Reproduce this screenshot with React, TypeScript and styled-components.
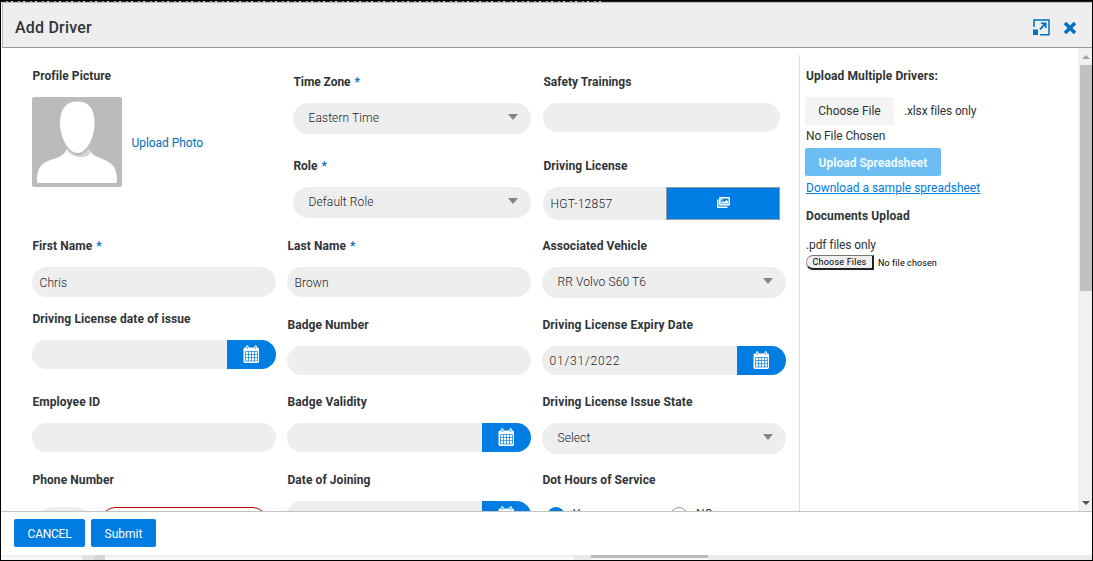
import React from "react";
import styled, { createGlobalStyle } from "styled-components";

const blue = "#007de3";
const pill = "#eeeeee";
const ink = "#2f3438";

const GlobalStyle = createGlobalStyle`
  * { box-sizing: border-box; }
  body { margin: 0; background: #fff; overflow: hidden; }
  button { font: inherit; padding: 0; }
`;

const Frame = styled.div`
  width: 1093px;
  height: 561px;
  border: 1px solid #000;
  display: flex;
  flex-direction: column;
  overflow: hidden;
  color: ${ink};
  font-family: Roboto, "Liberation Sans", sans-serif;
  font-size: 12px;
  background: #fff;
`;

const Backdrop = styled.div`
  height: 1px;
  flex: none;
  background: repeating-linear-gradient(90deg, #222 0 5px, #999 5px 7px, #222 7px 10px, #ddd 10px 12px) left / 600px 1px no-repeat #201c22;
`;

const Header = styled.header`
  height: 46px;
  flex: none;
  margin-left: 1px;
  border: 1px solid #999;
  border-top-color: #bbb;
  border-left-color: #bbb;
  border-right: 0;
  background: #eeeeee;
  display: flex;
  align-items: center;
  padding: 5px 15px 0 12px;
  gap: 13px;
`;

const Title = styled.h1`
  flex: 1;
  margin: 0;
  font-size: 16px;
  font-weight: 500;
  line-height: 20px;
  letter-spacing: 0.2px;
`;

const IconButton = styled.button`
  border: 0;
  background: none;
  display: flex;
`;

const Body = styled.main`
  height: 463px;
  flex: none;
  display: flex;
  overflow: hidden;
`;

const Form = styled.div`
  display: flex;
  gap: 11px;
  padding-left: 31px;
  width: 798px;
  flex: none;
`;

const Column = styled.div`
  width: 244px;
  flex: none;
  display: flex;
  flex-direction: column;
`;

const Field = styled.div<{ $before: number; $left?: number; $right?: number }>`
  flex: none;
  margin: ${(p) => p.$before}px ${(p) => p.$right ?? 0}px 0 ${(p) => p.$left ?? 0}px;
`;

const Label = styled.label<{ $ls?: number }>`
  display: block;
  height: 20px;
  line-height: 20px;
  margin-bottom: 11px;
  padding-left: 0.4px;
  font-weight: 700;
  white-space: nowrap;
  letter-spacing: ${(p) => p.$ls ?? 0.08}px;
`;

const Star = styled.span`
  color: #0071c1;
  margin-left: 4px;
`;

const Control = styled.div<{ $h?: number; $select?: boolean }>`
  height: ${(p) => p.$h ?? 29}px;
  border-radius: 16px;
  background: ${pill};
  display: flex;
  align-items: center;
  justify-content: space-between;
  overflow: hidden;
  padding-left: ${(p) => (p.$select ? 15.5 : 7.5)}px;
  padding-right: ${(p) => (p.$select ? 13 : 0)}px;
`;

const Value = styled.span<{ $ls?: number; $down?: number }>`
  white-space: nowrap;
  font-weight: 300;
  color: #1d2225;
  line-height: 16px;
  margin-top: ${(p) => p.$down ?? 0}px;
  letter-spacing: ${(p) => p.$ls ?? 0.1}px;
`;

const Caret = styled.span`
  border: 5.5px solid transparent;
  border-top: 6px solid #858585;
  border-bottom: 0;
  margin-top: -3px;
`;

const DateButton = styled.button`
  width: 49px;
  height: 100%;
  border: 0;
  background: ${blue};
  display: flex;
  align-items: center;
  justify-content: center;
  padding-bottom: 2px;
`;

const ImageButton = styled.button`
  width: 114px;
  height: 100%;
  border: 1px solid #8f9ba6;
  background: ${blue};
  display: flex;
  align-items: center;
  justify-content: center;
  padding-bottom: 3px;
`;

const LicenseControl = styled(Control)`
  border-radius: 16px 0 0 16px;
`;

const Profile = styled.div`
  display: flex;
  align-items: center;
  gap: 9px;
`;

const PhotoLink = styled.a`
  color: #006fb8;
  margin-top: 2px;
  padding-left: 0.5px;
  letter-spacing: -0.05px;
`;

const PhoneRow = styled.div`
  display: flex;
  gap: 12px;
  padding: 6px 9px 0 7px;
`;

const CodeBox = styled.div`
  width: 50px;
  height: 29px;
  border-radius: 14px;
  background: ${pill};
`;

const PhoneBox = styled.div`
  width: 167px;
  height: 29px;
  border-radius: 14px;
  border: 1px solid #b60000;
`;

const RadioRow = styled.div`
  display: flex;
  align-items: flex-start;
  padding: 6px 0 0 5px;
`;

const Radio = styled.span<{ $on?: boolean }>`
  width: 18px;
  height: 18px;
  border-radius: 50%;
  border: 1px solid ${(p) => (p.$on ? blue : "#999")};
  background: ${(p) => (p.$on ? blue : "#fff")};
`;

const RadioText = styled.span<{ $w?: number }>`
  width: ${(p) => p.$w ?? 40}px;
  padding-left: 8px;
  line-height: 14px;
`;

const Side = styled.aside`
  margin-top: 7px;
  border-left: 1px solid #ddd;
  padding-left: 6px;
  width: 279px;
  flex: none;
  display: flex;
  flex-direction: column;
  align-items: flex-start;
`;

const SideTitle = styled.h2<{ $before: number }>`
  margin: ${(p) => p.$before}px 0 0;
  font-size: 12px;
  font-weight: 700;
  line-height: 20px;
  letter-spacing: 0.1px;
`;

const FileRow = styled.div`
  display: flex;
  align-items: center;
  gap: 10px;
  margin-top: 11px;
`;

const ChooseFile = styled.button`
  width: 89px;
  height: 28px;
  margin-left: -1px;
  border: 0;
  border-radius: 2px;
  background: #f4f4f4;
  color: ${ink};
`;

const SideText = styled.span<{ $before?: number; $ls?: number }>`
  margin-top: ${(p) => p.$before ?? 0}px;
  line-height: 16px;
  letter-spacing: ${(p) => p.$ls ?? -0.1}px;
`;

const UploadButton = styled.button`
  width: 136px;
  height: 28px;
  margin: 4px 0 0 -1px;
  border: 0;
  border-radius: 2px;
  background: #6bbdf2;
  color: #eef8ff;
  font-weight: 700;
  padding-top: 1px;
`;

const SampleLink = styled.a`
  color: #007bdc;
  text-decoration: underline;
  margin-top: 4px;
  line-height: 16px;
`;

const NativeRow = styled.div`
  display: flex;
  align-items: center;
  gap: 4px;
  margin-top: 2px;
  font-size: 9px;
  letter-spacing: 0.1px;
  color: #000;
`;

const NativeButton = styled.button`
  width: 68px;
  height: 15px;
  border: 1px solid #222;
  border-width: 1px 2px 2px 1px;
  border-left-color: #999;
  border-top-color: #777;
  border-radius: 7px 0 0 7px;
  background: #efefef;
  line-height: 11px;
  padding-top: 1px;
  letter-spacing: 0.2px;
`;

const Scroll = styled.div`
  width: 14px;
  flex: none;
  background: #f1f1f1;
  display: flex;
  flex-direction: column;
  align-items: center;
  padding: 7px 0 6px 2px;
`;

const Arrow = styled.span<{ $down?: boolean }>`
  border: 4px solid transparent;
  border-${(p) => (p.$down ? "top" : "bottom")}: 4px solid ${(p) => (p.$down ? "#505050" : "#a3a3a3")};
  border-${(p) => (p.$down ? "bottom" : "top")}: 0;
  margin-top: ${(p) => (p.$down ? "auto" : 0)};
`;

const Thumb = styled.div`
  width: 12px;
  height: 226px;
  margin-top: 6px;
  background: #c1c1c1;
`;

const Footer = styled.footer`
  height: 44px;
  flex: none;
  border-top: 1px solid #c3c3c3;
  display: flex;
  gap: 6px;
  padding: 7px 0 0 13px;
`;

const Action = styled.button<{ $w: number; $ls?: number }>`
  width: ${(p) => p.$w}px;
  height: 28px;
  border: 0;
  border-radius: 2px;
  background: ${blue};
  color: #fff;
  padding-top: 1px;
  letter-spacing: ${(p) => p.$ls ?? 0}px;
`;

const Behind = styled.div`
  flex: 1;
  display: flex;
  background: linear-gradient(#e9e9e9, #f7f7f7 2px);
`;

const BehindPart = styled.div<{ $w: number; $c: string; $h?: number }>`
  width: ${(p) => p.$w}px;
  height: ${(p) => p.$h ?? 5}px;
  background: ${(p) => p.$c};
`;

const CalendarIcon = () => (
  <svg width="17" height="18" viewBox="0 0 17 18">
    <path fill="#fff" d="M1.500 2.500h1.600v-1a1.200 1.200 0 0 1 2.400 0v1h6v-1a1.200 1.200 0 0 1 2.400 0v1h1.100l1 1V17l-1 1h-13.500l-1-1V3.500z" />
    <path fill="none" stroke={blue} strokeWidth=".7" d="M2.500 6.500h12v9.500h-12zM2.500 9.500h12M2.500 12.700h12M5.500 6.500V16M8.500 6.500V16M11.500 6.500V16" />
    <path stroke={blue} strokeWidth=".7" d="M4.300 1.500v2.500M12.700 1.500v2.500" />
  </svg>
);

const ImagesIcon = () => (
  <svg width="13" height="11" viewBox="0 0 13 11">
    <path fill="none" stroke="#fff" strokeWidth="1.500" d="M.8 2.500v7.700h9.700" />
    <path fill="#fff" fillRule="evenodd" d="M3 0h9q1 0 1 1v6.500q0 1-1 1H3q-1 0-1-1V1q0-1 1-1zm.7 1.500V7h7.800V1.500z" />
    <path fill="#fff" d="M4.300 6.500V5.200L5.800 4l1.300 1.100L9.800 3l1.200 1.400v2.100zM4.300 2h1.500v1.300H4.300z" />
  </svg>
);

const ExpandIcon = () => (
  <svg width="17" height="17" viewBox="0 0 17 17">
    <path fill="none" stroke="#0071c1" strokeWidth="1.500" d="M1 8V1h15v14.800H7" />
    <path fill="#0071c1" d="M0 10.500h5V16H0zM8 3.500h5.500V9h-1.600V6.500L7.500 11 6.300 9.800l4.300-4.500H8z" />
  </svg>
);

const CloseIcon = () => (
  <svg width="14" height="14" viewBox="0 0 14 14">
    <path stroke="#0071c1" strokeWidth="3.600" d="M2 2l10 10M12 2L2 12" />
  </svg>
);

const Avatar = () => (
  <svg width="90" height="90" viewBox="0 0 90 90">
    <rect width="90" height="90" rx="2" fill="#bbbbbb" />
    <path fill="#fff" d="M35 51q0 4 5 6.500 8 5 17-1l-1-5q3 6 12 9.500c13 5 17 9 17 23.500q0 1.500-2 1.500H7q-2 0-2-1.500C5 70 10 65 22 62q12-4 13-11z" />
    <path fill="#d3d3d3" d="M35.500 52q4 8 13.500 8 8 0 9-4l-2-4q-5 6-10 6-5 0-10-6z" />
    <path fill="#fff" d="M45.500 4.500C57 4.500 62 12 62.500 24c.6 15-7 32-17 32S27.500 39 28 24C28.500 12 34 4.500 45.500 4.500z" />
  </svg>
);

type FieldProps = {
  label: string;
  before: number;
  ls?: number;
  required?: boolean;
  left?: number;
  right?: number;
  children?: React.ReactNode;
};

const FormField = ({ label, before, ls, required, left, right, children }: FieldProps) => (
  <Field $before={before} $left={left} $right={right}>
    <Label $ls={ls}>
      {label}
      {required && <Star>*</Star>}
    </Label>
    {children}
  </Field>
);

const SelectBox = ({ text, ls }: { text: string; ls?: number }) => (
  <Control $h={31} $select>
    <Value $ls={ls} $down={-1}>{text}</Value>
    <Caret />
  </Control>
);

const DateBox = ({ text, ls }: { text?: string; ls?: number }) => (
  <Control>
    <Value $ls={ls}>{text}</Value>
    <DateButton><CalendarIcon /></DateButton>
  </Control>
);

export default function App() {
  return (
    <Frame>
      <GlobalStyle />
      <Backdrop />
      <Header>
        <Title>Add Driver</Title>
        <IconButton><ExpandIcon /></IconButton>
        <IconButton><CloseIcon /></IconButton>
      </Header>
      <Body>
        <Form>
          <Column>
            <FormField label="Profile Picture" before={18}>
              <Profile>
                <Avatar />
                <PhotoLink>Upload Photo</PhotoLink>
              </Profile>
            </FormField>
            <FormField label="First Name" before={49} required>
              <Control $h={30}><Value $down={2}>Chris</Value></Control>
            </FormField>
            <FormField label="Driving License date of issue" before={12} ls={0.1}><DateBox /></FormField>
            <FormField label="Employee ID" before={23}><Control /></FormField>
            <FormField label="Phone Number" before={18}>
              <PhoneRow><CodeBox /><PhoneBox /></PhoneRow>
            </FormField>
          </Column>
          <Column>
            <FormField label="Time Zone" before={24} left={6} ls={-0.05} required><SelectBox text="Eastern Time" /></FormField>
            <FormField label="Role" before={22} left={6} ls={0} required><SelectBox text="Default Role" /></FormField>
            <FormField label="Last Name" before={18} required>
              <Control $h={30}><Value $down={2}>Brown</Value></Control>
            </FormField>
            <FormField label="Badge Number" before={18}><Control /></FormField>
            <FormField label="Badge Validity" before={17} ls={0.15}><DateBox /></FormField>
            <FormField label="Date of Joining" before={18}><DateBox /></FormField>
          </Column>
          <Column>
            <FormField label="Safety Trainings" before={24} left={1} right={6} ls={0.02}><Control /></FormField>
            <FormField label="Driving License" before={24} left={1} right={6}>
              <LicenseControl $h={33}>
                <Value $ls={0.3}>HGT-12857</Value>
                <ImageButton><ImagesIcon /></ImageButton>
              </LicenseControl>
            </FormField>
            <FormField label="Associated Vehicle" before={16}><SelectBox text="RR Volvo S60 T6" /></FormField>
            <FormField label="Driving License Expiry Date" before={17} ls={0.14}><DateBox text="01/31/2022" ls={0.8} /></FormField>
            <FormField label="Driving License Issue State" before={17} ls={0.14}><SelectBox text="Select" /></FormField>
            <FormField label="Dot Hours of Service" before={16}>
              <RadioRow>
                <Radio $on /><RadioText $w={105}>Yes</RadioText>
                <Radio /><RadioText>NO</RadioText>
              </RadioRow>
            </FormField>
          </Column>
        </Form>
        <Side>
          <SideTitle $before={11}>Upload Multiple Drivers:</SideTitle>
          <FileRow>
            <ChooseFile>Choose File</ChooseFile>
            <SideText $ls={-0.15}>.xlsx files only</SideText>
          </FileRow>
          <SideText $before={3}>No File Chosen</SideText>
          <UploadButton>Upload Spreadsheet</UploadButton>
          <SampleLink>Download a sample spreadsheet</SampleLink>
          <SideTitle $before={10}>Documents Upload</SideTitle>
          <SideText $before={11}>.pdf files only</SideText>
          <NativeRow>
            <NativeButton>Choose Files</NativeButton>
            <span>No file chosen</span>
          </NativeRow>
        </Side>
        <Scroll>
          <Arrow />
          <Thumb />
          <Arrow $down />
        </Scroll>
      </Body>
      <Footer>
        <Action $w={71} $ls={-0.25}>CANCEL</Action>
        <Action $w={65}>Submit</Action>
      </Footer>
      <Behind>
        <BehindPart $w={81} $c="transparent" />
        <BehindPart $w={12} $c="#e2e2e2" />
        <BehindPart $w={11} $c="#d5d5d5" />
        <BehindPart $w={469} $c="transparent" />
        <BehindPart $w={17} $c="#e8e8e8" />
        <BehindPart $w={117} $c="#b9b9b9" $h={3} />
        <BehindPart $w={384} $c="#ebebeb" />
      </Behind>
    </Frame>
  );
}
